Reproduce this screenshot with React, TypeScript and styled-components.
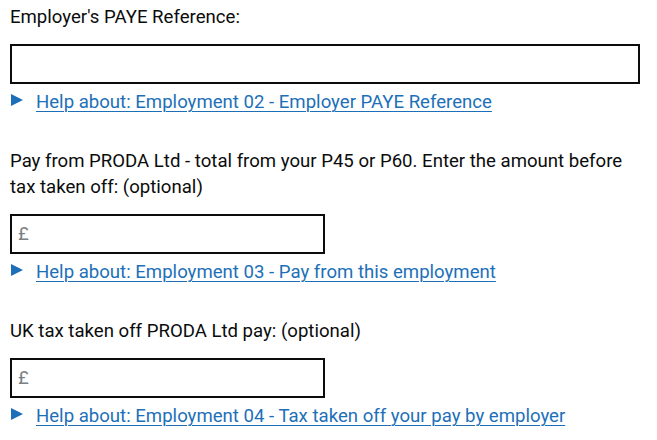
import React from "react";
import styled, { createGlobalStyle } from "styled-components";

const GlobalStyle = createGlobalStyle`
  body {
    margin: 0;
    background: #ffffff;
    font-family: Roboto, "Liberation Sans", sans-serif;
    color: #0b0c0c;
  }
`;

const Form = styled.form`
  padding: 4px 17px 0 10px;
  display: flex;
  flex-direction: column;
`;

const Group = styled.div`
  display: flex;
  flex-direction: column;
  margin-bottom: 33px;
`;

const Label = styled.label`
  display: block;
  font-size: 18.6px;
  line-height: 26px;
  margin-bottom: 14px;
  color: #0b0c0c;
`;

const InputWrap = styled.div<{ narrow?: boolean }>`
  box-sizing: border-box;
  display: flex;
  align-items: center;
  height: 40px;
  width: ${({ narrow }) => (narrow ? "315px" : "630px")};
  border: 2px solid #0b0c0c;
  padding: 0 6px;
`;

const Prefix = styled.span`
  font-size: 18.6px;
  color: #7a7f82;
  margin-right: 4px;
`;

const Input = styled.input`
  flex: 1;
  min-width: 0;
  border: none;
  outline: none;
  background: transparent;
  font: 18.6px Roboto, "Liberation Sans", sans-serif;
  color: #0b0c0c;
  padding: 0;
`;

const Help = styled.div`
  display: flex;
  align-items: flex-start;
  margin-top: 5px;
  line-height: 26px;
`;

const Arrow = styled.span`
  flex: none;
  width: 0;
  height: 0;
  margin-top: 5px;
  margin-left: 1px;
  margin-right: 13px;
  border-style: solid;
  border-width: 6.5px 0 6.5px 12px;
  border-color: transparent transparent transparent #1d70b8;
`;

const HelpLink = styled.a`
  font-size: 18.6px;
  color: #1d70b8;
  text-decoration: underline;
  text-decoration-thickness: 1px;
  text-underline-offset: 3px;
  cursor: pointer;
`;

interface FieldProps {
  label: string;
  help: string;
  money?: boolean;
}

const Field = ({ label, help, money }: FieldProps) => (
  <Group>
    <Label>{label}</Label>
    <InputWrap narrow={money}>
      {money && <Prefix>£</Prefix>}
      <Input type="text" />
    </InputWrap>
    <Help>
      <Arrow />
      <HelpLink>{help}</HelpLink>
    </Help>
  </Group>
);

export default function App() {
  return (
    <>
      <GlobalStyle />
      <Form>
        <Field
          label="Employer's PAYE Reference:"
          help="Help about: Employment 02 - Employer PAYE Reference"
        />
        <Field
          money
          label="Pay from PRODA Ltd - total from your P45 or P60. Enter the amount before tax taken off: (optional)"
          help="Help about: Employment 03 - Pay from this employment"
        />
        <Field
          money
          label="UK tax taken off PRODA Ltd pay: (optional)"
          help="Help about: Employment 04 - Tax taken off your pay by employer"
        />
      </Form>
    </>
  );
}
